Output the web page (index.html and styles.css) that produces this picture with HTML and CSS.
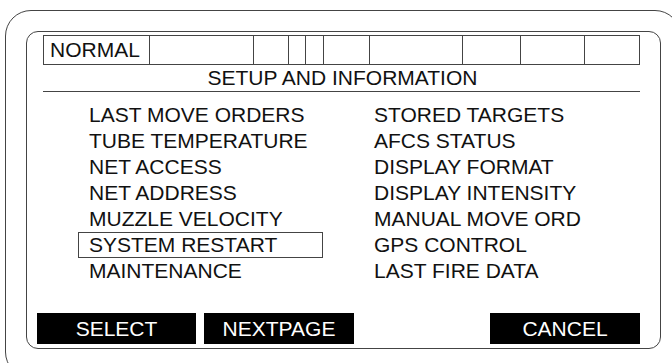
FILE: index.html
```html
<!DOCTYPE html>
<html>
<head>
<meta charset="utf-8">
<link rel="stylesheet" href="styles.css">
</head>
<body>
<div class="frame">
  <div class="screen">
    <div class="status">
      <div class="cell c1">NORMAL</div>
      <div class="cell c2"></div>
      <div class="cell c3"></div>
      <div class="cell c4"></div>
      <div class="cell c5"></div>
      <div class="cell c6"></div>
      <div class="cell c7"></div>
      <div class="cell c8"></div>
      <div class="cell c9"></div>
      <div class="cell c10"></div>
    </div>
    <div class="title">SETUP AND INFORMATION</div>
    <div class="menu">
      <div class="item">LAST MOVE ORDERS</div>
      <div class="item">STORED TARGETS</div>
      <div class="item">TUBE TEMPERATURE</div>
      <div class="item">AFCS STATUS</div>
      <div class="item">NET ACCESS</div>
      <div class="item">DISPLAY FORMAT</div>
      <div class="item">NET ADDRESS</div>
      <div class="item">DISPLAY INTENSITY</div>
      <div class="item">MUZZLE VELOCITY</div>
      <div class="item">MANUAL MOVE ORD</div>
      <div class="item selected">SYSTEM RESTART</div>
      <div class="item">GPS CONTROL</div>
      <div class="item">MAINTENANCE</div>
      <div class="item">LAST FIRE DATA</div>
    </div>
    <div class="softkeys">
      <div class="key">SELECT</div>
      <div class="key">NEXTPAGE</div>
      <div class="key blank"></div>
      <div class="key">CANCEL</div>
    </div>
  </div>
</div>
</body>
</html>
```
FILE: styles.css
```css
html, body {
  margin: 0;
  padding: 0;
  background: #ffffff;
  overflow: hidden;
  width: 672px;
  height: 363px;
}

body {
  font-family: "Liberation Sans", Arial, sans-serif;
  color: #111;
}

.frame {
  box-sizing: border-box;
  margin: 10px 0 0 5px;
  width: 676px;
  height: 368px;
  border: 1px solid #444;
  border-radius: 26px;
  padding: 20px 0 0 20px;
}

.screen {
  box-sizing: border-box;
  width: 635px;
  height: 318px;
  border: 1px solid #444;
  border-radius: 12px;
  padding: 3px 0 0 0;
  display: flex;
  flex-direction: column;
}

.status {
  box-sizing: border-box;
  margin-left: 16px;
  width: 597px;
  height: 30px;
  border: 1px solid #444;
  display: grid;
  grid-template-columns: 106px 104px 35px 17px 18px 46px 93px 58px 64px 1fr;
}

.cell {
  border-right: 1px solid #444;
  font-size: 21px;
  line-height: 28px;
  padding-left: 6px;
  white-space: nowrap;
}

.cell.c10 {
  border-right: none;
}

.title {
  box-sizing: border-box;
  margin-left: 16px;
  width: 597px;
  height: 27px;
  border-bottom: 1px solid #444;
  text-align: center;
  font-size: 21px;
  line-height: 26px;
  padding-left: 2px;
}

.menu {
  margin: 10px 0 0 51px;
  display: grid;
  grid-template-columns: 285px 245px;
  grid-auto-rows: 26px;
}

.item {
  box-sizing: border-box;
  width: 245px;
  font-size: 21px;
  line-height: 26px;
  padding-left: 11px;
  white-space: nowrap;
}

.item.selected {
  border: 1px solid #444;
  line-height: 24px;
  padding-left: 10px;
}

.softkeys {
  margin: auto 0 4px 10px;
  display: grid;
  grid-template-columns: 159px 150px 120px 150px;
  column-gap: 8px;
}

.key {
  background: #000;
  color: #fff;
  height: 31px;
  font-size: 21px;
  line-height: 31px;
  text-align: center;
}

.key.blank {
  background: transparent;
}
```
